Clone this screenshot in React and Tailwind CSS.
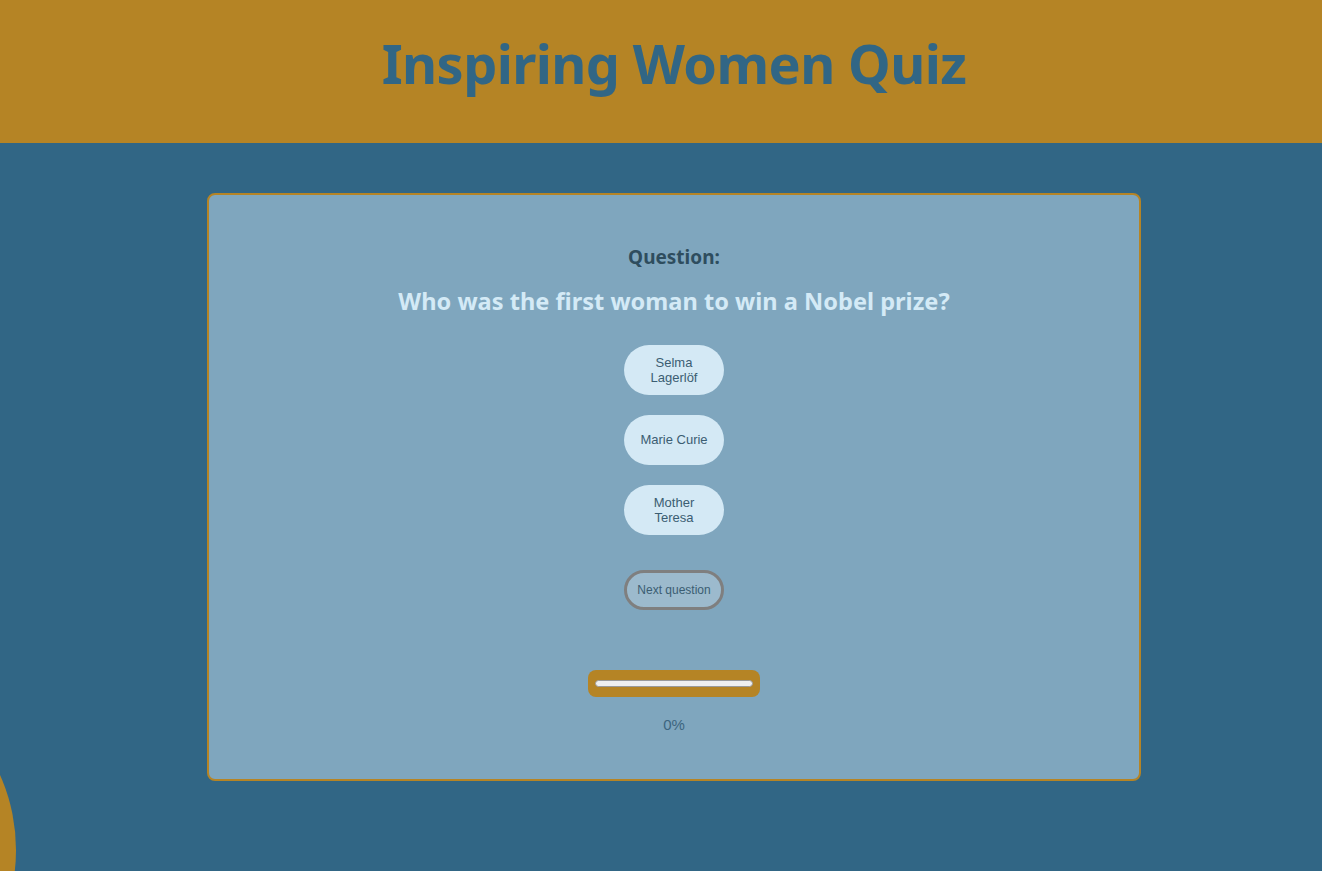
export default function App() {
  const answers = ["Selma Lagerlöf", "Marie Curie", "Mother Teresa"];

  return (
    <div className="relative min-h-[871px] overflow-hidden bg-[#316685]">
      <header className="flex h-[143px] items-center justify-center bg-[#b58425] pb-[16px] pl-[26px]">
        <h1 className="font-['Noto_Sans',sans-serif] text-[54px] font-bold tracking-[-0.6px] text-[#316685]">
          Inspiring Women Quiz
        </h1>
      </header>

      <main className="flex justify-center pl-[26px] pt-[50px]">
        <section className="flex h-[588px] w-[934px] flex-col items-center rounded-lg border-2 border-[#b58425] bg-[#7fa6be] pt-[48px]">
          <h2 className="font-['Noto_Sans',sans-serif] text-[19px] font-bold text-[#2e4d5e]">Question:</h2>
          <p className="mt-[12px] font-['Noto_Sans',sans-serif] text-[23.6px] font-bold text-[#d4eaf6]">
            Who was the first woman to win a Nobel prize?
          </p>

          <div className="mt-[26px] flex flex-col gap-5">
            {answers.map((a) => (
              <button
                key={a}
                type="button"
                className="flex h-[50px] w-[100px] items-center justify-center rounded-full bg-[#d4e9f5] px-4 font-['Liberation_Sans',sans-serif] text-[13px] leading-[15px] text-[#3b5d72]"
              >
                {a}
              </button>
            ))}
          </div>

          <button
            type="button"
            className="mt-[35px] h-10 w-[100px] rounded-full border-[3px] border-[#7f7f7f] bg-[#9cbacd] font-['Liberation_Sans',sans-serif] text-[12px] text-[#3b5d72]"
          >
            Next question
          </button>

          <div className="mt-[60px] flex h-[27px] w-[172px] items-center rounded-lg bg-[#b58425] px-[7px]">
            <div className="h-[7px] w-full rounded-full border border-[#9a9a9a] bg-[#efefef]" />
          </div>
          <p className="mt-[17px] font-['Liberation_Sans',sans-serif] text-[15px] text-[#3d6580]">0%</p>
        </section>
      </main>

      <div className="absolute left-[-352px] top-[666px] h-[368px] w-[368px] rounded-full bg-[#b58425]" />
    </div>
  );
}
